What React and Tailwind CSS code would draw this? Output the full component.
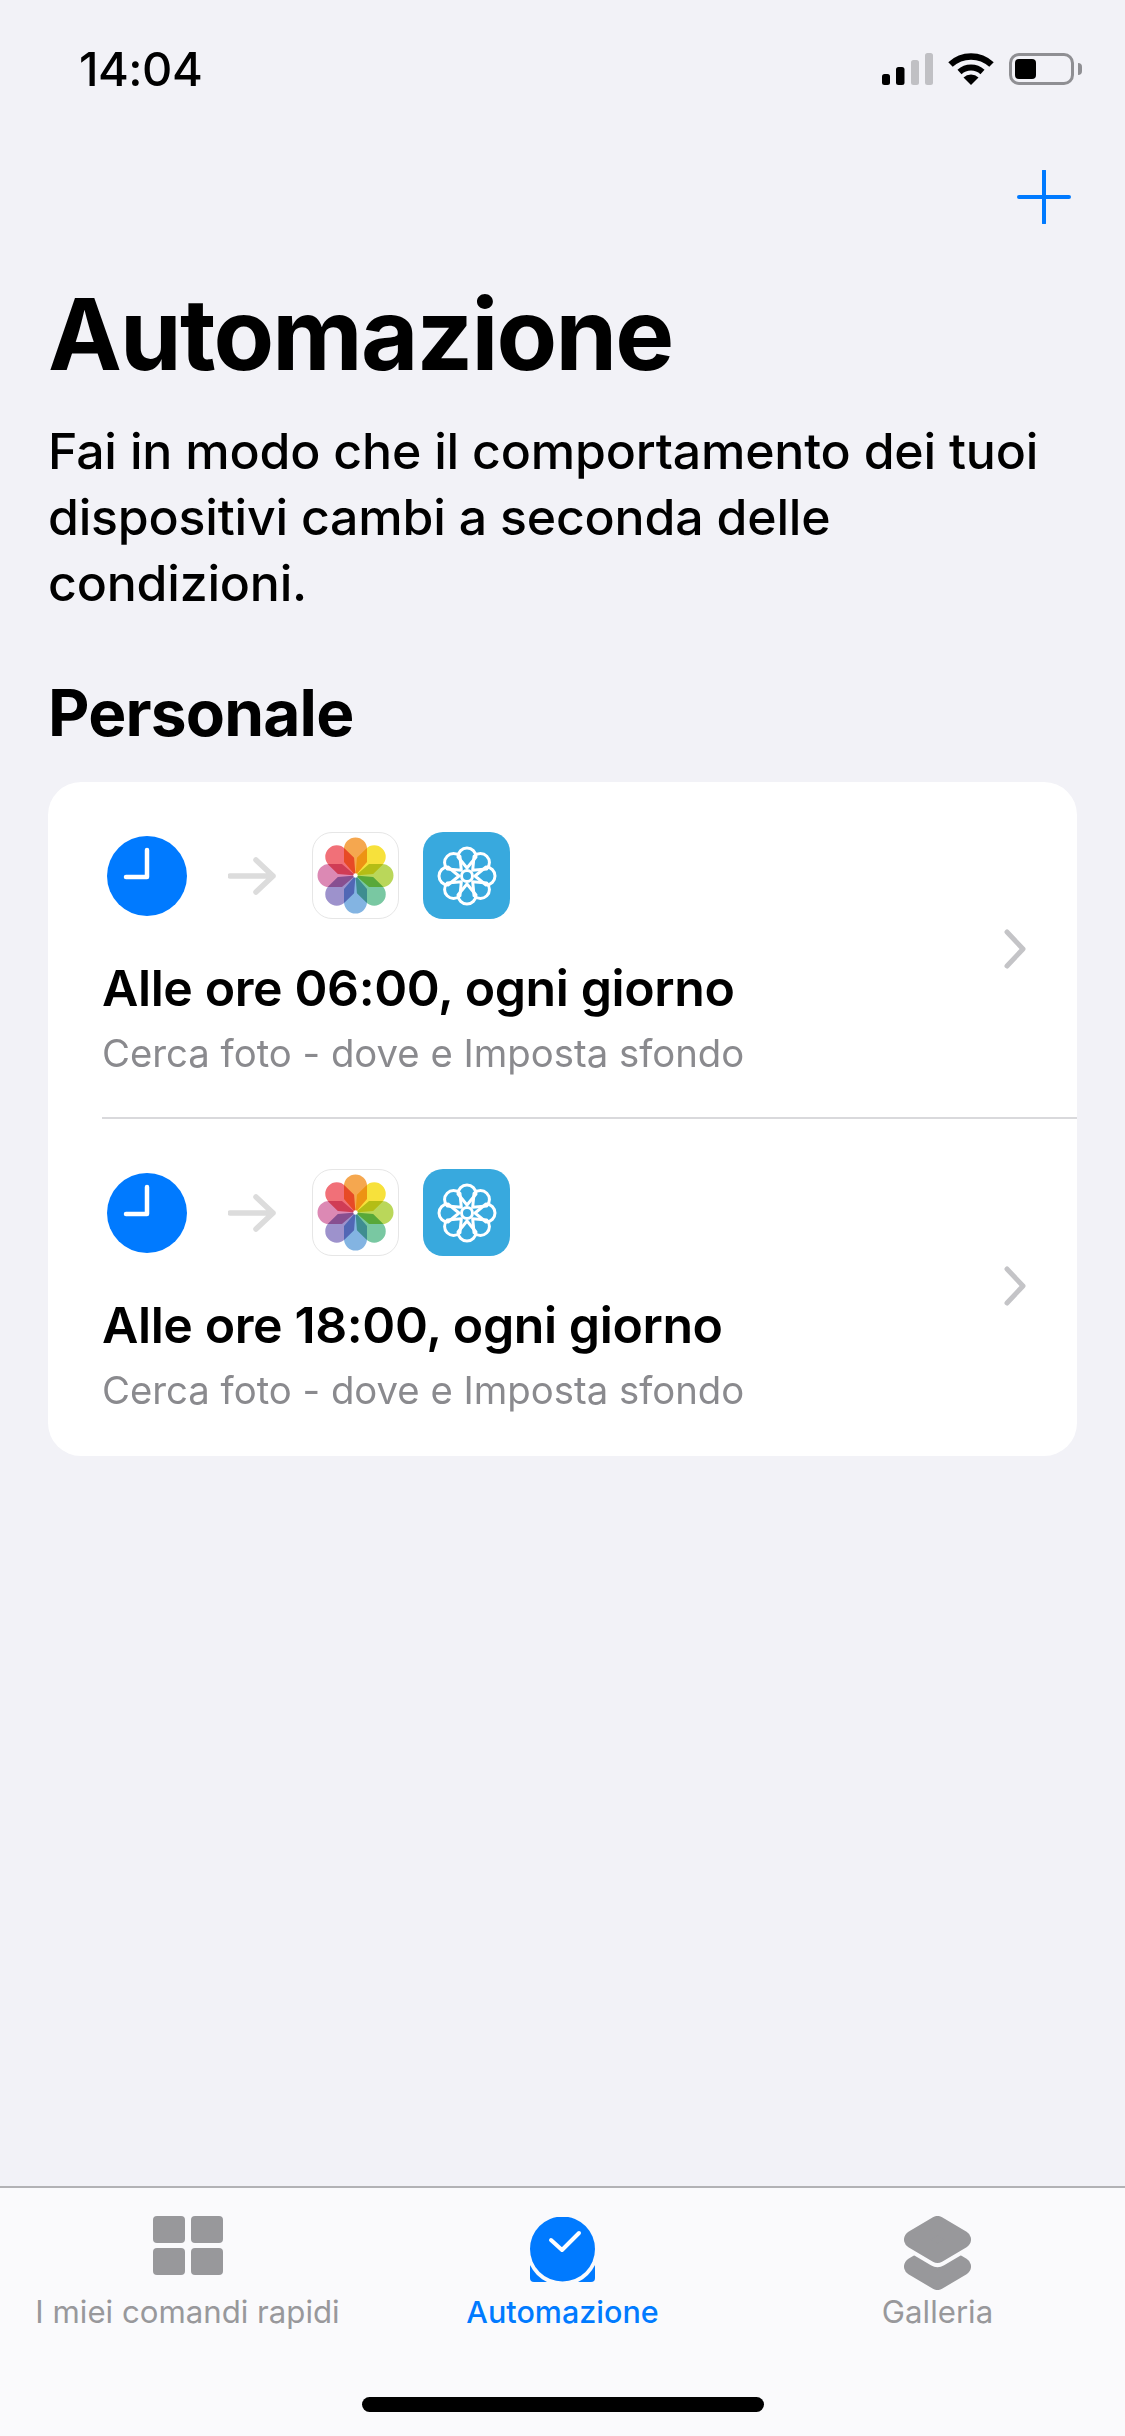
const font = { fontFamily: 'Inter, "Noto Sans", sans-serif' }

const angles = [0, 45, 90, 135, 180, 225, 270, 315]
const petalColors = ['#f5a040', '#f7df2a', '#b4d44c', '#6ec39a', '#78aee0', '#9589c8', '#d97fae', '#f0646c']

function StatusBar() {
  return (
    <div className="flex h-[132px] shrink-0 items-start justify-between pl-[79px] pr-[43px] pt-[46px]">
      <span className="text-[47px] leading-[46px] font-medium tracking-[-0.5px] text-black">14:04</span>
      <div className="mt-[6px] flex items-center gap-[15px]">
        <svg width="51" height="32" viewBox="0 0 51 32">
          <rect x="0" y="21" width="8" height="11" rx="2.500" fill="#000" />
          <rect x="14" y="14" width="8.500" height="18" rx="2.500" fill="#000" />
          <rect x="29" y="7" width="8" height="25" rx="2.500" fill="#c0c0c4" />
          <rect x="43" y="0" width="8" height="32" rx="2.500" fill="#c0c0c4" />
        </svg>
        <svg width="46" height="33" viewBox="0 0 46 33">
          <path d="M23 33l-7.500-7.500a11 11 0 0 1 15 0z" fill="#000" />
          <path d="M11.500 20a17 17 0 0 1 23 0" fill="none" stroke="#000" strokeWidth="6" />
          <path d="M2.500 12.500a30 30 0 0 1 41 0" fill="none" stroke="#000" strokeWidth="6.500" />
        </svg>
        <div className="flex items-center">
          <div className="h-[32px] w-[65px] rounded-[10px] border-[3px] border-[#8f8f93] p-[3px]">
            <div className="h-full w-[21px] rounded-[4px] bg-black" />
          </div>
          <div className="ml-[4px] h-[12px] w-[4px] rounded-r-full bg-[#8f8f93]" />
        </div>
      </div>
    </div>
  )
}

function ClockIcon() {
  return (
    <svg width="80" height="80" viewBox="0 0 80 80" className="shrink-0">
      <circle cx="40" cy="40" r="40" fill="#007aff" />
      <path d="M40 14v27H19" fill="none" stroke="#fff" strokeWidth="4.500" strokeLinecap="round" strokeLinejoin="round" />
    </svg>
  )
}

function ArrowIcon() {
  return (
    <svg width="48" height="38" viewBox="0 0 48 38" className="shrink-0">
      <path d="M2 19h43M28 3l17 16-17 16" fill="none" stroke="#dcdcdc" strokeWidth="5.500" strokeLinecap="round" strokeLinejoin="round" />
    </svg>
  )
}

function PhotosIcon() {
  return (
    <div className="h-[87px] w-[87px] shrink-0 rounded-[20px] border border-[#e6e6e6] bg-white">
      <svg width="85" height="85" viewBox="0 0 85 85" className="block">
        {angles.map((a, i) => (
          <path
            key={a}
            d="M42.500 42.500L31 29V16a11.500 11.500 0 0 1 23 0V29z"
            fill={petalColors[i]}
            opacity="0.92"
            transform={`rotate(${a} 42.500 42.500)`}
            style={{ mixBlendMode: 'multiply' }}
          />
        ))}
        <circle cx="42.500" cy="42.500" r="2.200" fill="#fff" />
      </svg>
    </div>
  )
}

function WallpaperIcon() {
  return (
    <div className="flex h-[87px] w-[87px] shrink-0 items-center justify-center rounded-[20px] bg-[#38a9de]">
      <svg width="62" height="62" viewBox="0 0 62 62" fill="none" stroke="#fff" strokeWidth="3">
        {angles.map((a) => (
          <path key={a} d="M31 23L22 12a9 9 0 0 1 18 0z" strokeLinejoin="round" transform={`rotate(${a} 31 31)`} />
        ))}
        <circle cx="31" cy="31" r="5.500" fill="#38a9de" />
      </svg>
    </div>
  )
}

function AutomationRow({ title, divider }) {
  return (
    <div className="relative h-[337px] pl-[54px]">
      <div className="flex items-center pt-[50px]">
        <div className="ml-[5px]">
          <ClockIcon />
        </div>
        <div className="ml-[41px]">
          <ArrowIcon />
        </div>
        <div className="ml-[36px]">
          <PhotosIcon />
        </div>
        <div className="ml-[24px]">
          <WallpaperIcon />
        </div>
      </div>
      <div className="mt-[39px] text-[50px] leading-[60px] font-semibold tracking-[-0.4px] text-black">{title}</div>
      <div className="mt-[10px] text-[38.300px] leading-[50px] text-[#8a8a8e]">Cerca foto - dove e Imposta sfondo</div>
      <svg width="24" height="40" viewBox="0 0 24 40" className="absolute right-[50px] top-[147px]">
        <path d="M4 3l16 17L4 37" fill="none" stroke="#c4c4c7" strokeWidth="5" strokeLinecap="round" strokeLinejoin="round" />
      </svg>
      {divider && <div className="absolute bottom-0 left-[54px] right-0 h-[2px] bg-[#d9d9dc]" />}
    </div>
  )
}

function TabBar() {
  return (
    <div className="relative h-[250px] shrink-0 border-t-2 border-[#b2b2b5] bg-[#fafafc]">
      <div className="grid grid-cols-3 pt-[28px]">
        <div className="flex flex-col items-center">
          <div className="flex h-[74px] items-start">
            <div className="grid grid-cols-2 gap-x-[6px] gap-y-[5px]">
              <div className="h-[27px] w-[32px] rounded-[4px] bg-[#98989b]" />
              <div className="h-[27px] w-[32px] rounded-[4px] bg-[#98989b]" />
              <div className="h-[27px] w-[32px] rounded-[4px] bg-[#98989b]" />
              <div className="h-[27px] w-[32px] rounded-[4px] bg-[#98989b]" />
            </div>
          </div>
          <span className="mt-[2px] text-[31.200px] leading-[40px] text-[#98989b]">I miei comandi rapidi</span>
        </div>
        <div className="flex flex-col items-center">
          <div className="flex h-[74px] items-start">
            <svg width="65" height="65" viewBox="0 0 65 65" className="mt-[1px]">
              <rect x="0" y="44" width="65" height="21" rx="4" fill="#007aff" />
              <circle cx="32.500" cy="32.500" r="36" fill="#fafafc" />
              <circle cx="32.500" cy="32" r="32.500" fill="#007aff" />
              <path d="M21 23l11 10 17-17" fill="none" stroke="#fff" strokeWidth="4" strokeLinecap="round" strokeLinejoin="round" />
            </svg>
          </div>
          <span className="mt-[2px] text-[30.500px] leading-[40px] font-medium text-[#007aff]">Automazione</span>
        </div>
        <div className="flex flex-col items-center">
          <div className="flex h-[74px] items-start">
            <svg width="67" height="74" viewBox="0 0 67 74" strokeWidth="18" strokeLinejoin="round">
              <polygon points="33.500,36 58,50.500 33.500,65 9,50.500" fill="#98989b" stroke="#98989b" />
              <polygon points="33.500,9 58,23.500 33.500,38 9,23.500" fill="#fafafc" stroke="#fafafc" strokeWidth="26" />
              <polygon points="33.500,9 58,23.500 33.500,38 9,23.500" fill="#98989b" stroke="#98989b" />
            </svg>
          </div>
          <span className="mt-[2px] text-[31.200px] leading-[40px] text-[#98989b]">Galleria</span>
        </div>
      </div>
      <div className="absolute bottom-[24px] left-[362px] h-[15px] w-[402px] rounded-full bg-black" />
    </div>
  )
}

export default function App() {
  return (
    <div className="flex h-[2436px] w-[1125px] flex-col overflow-hidden bg-[#f2f2f7]" style={font}>
      <StatusBar />
      <div className="flex-1 px-[48px]">
        <div className="flex h-[92px] justify-end pr-[6px] pt-[38px]">
          <svg width="54" height="54" viewBox="0 0 54 54">
            <path d="M27 1v52M2 27h50" fill="none" stroke="#007aff" strokeWidth="4" strokeLinecap="round" />
          </svg>
        </div>
        <h1 className="mt-[55px] text-[99px] leading-[110px] font-bold tracking-[-1.800px] text-black">Automazione</h1>
        <p className="mt-[29px] w-[1029px] text-[50px] leading-[66px] font-[550] tracking-[-0.2px] text-black">
          Fai in modo che il comportamento dei tuoi dispositivi cambi a seconda delle condizioni.
        </p>
        <h2 className="mt-[57px] text-[64px] leading-[80px] font-bold tracking-[-0.800px] text-black">Personale</h2>
        <div className="mt-[29px] h-[674px] overflow-hidden rounded-[33px] bg-white">
          <AutomationRow title="Alle ore 06:00, ogni giorno" divider />
          <AutomationRow title="Alle ore 18:00, ogni giorno" />
        </div>
      </div>
      <TabBar />
    </div>
  )
}
